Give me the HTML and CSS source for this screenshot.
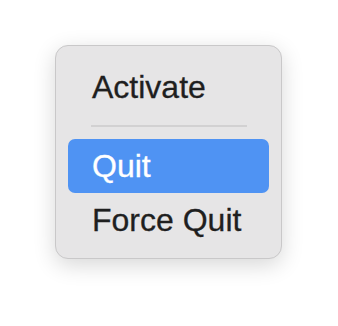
FILE: index.html
```html
<!DOCTYPE html>
<html lang="en">
<head>
    <meta charset="UTF-8">
    <meta name="viewport" content="width=device-width, initial-scale=1.0">
    <title>Context Menu</title>
    <link rel="stylesheet" href="styles.css">
</head>
<body>
<div class="menu">
    <div class="menu-item">Activate</div>
    <div class="separator"></div>
    <div class="menu-item selected">Quit</div>
    <div class="menu-item">Force Quit</div>
</div>
</body>
</html>
```

FILE: styles.css
```css
html, body {
    height: 100%;
}
body {
    font-family: "Liberation Sans", Arial, sans-serif;
    background-color: #ffffff;
    margin: 0;
    padding: 45px 0 0 55px;
    box-sizing: border-box;
    color: #1f1f1f;
    overflow: hidden;
}
.menu {
    width: 227px;
    height: 214px;
    box-sizing: border-box;
    padding: 14px 12px 0;
    background-color: #e6e5e6;
    border: 1px solid #c9c8c9;
    border-radius: 13px;
    box-shadow: 0 6px 22px rgba(0, 0, 0, 0.16);
}
.menu-item {
    height: 54px;
    line-height: 54px;
    padding-left: 24px;
    font-size: 32px;
    border-radius: 7px;
    -webkit-text-stroke: 0.3px currentColor;
}
.menu-item.selected {
    background-color: #4f93f3;
    color: #ffffff;
}
.separator {
    height: 2px;
    background-color: #d2d1d2;
    margin: 11px 22px 12px 23px;
}
```
